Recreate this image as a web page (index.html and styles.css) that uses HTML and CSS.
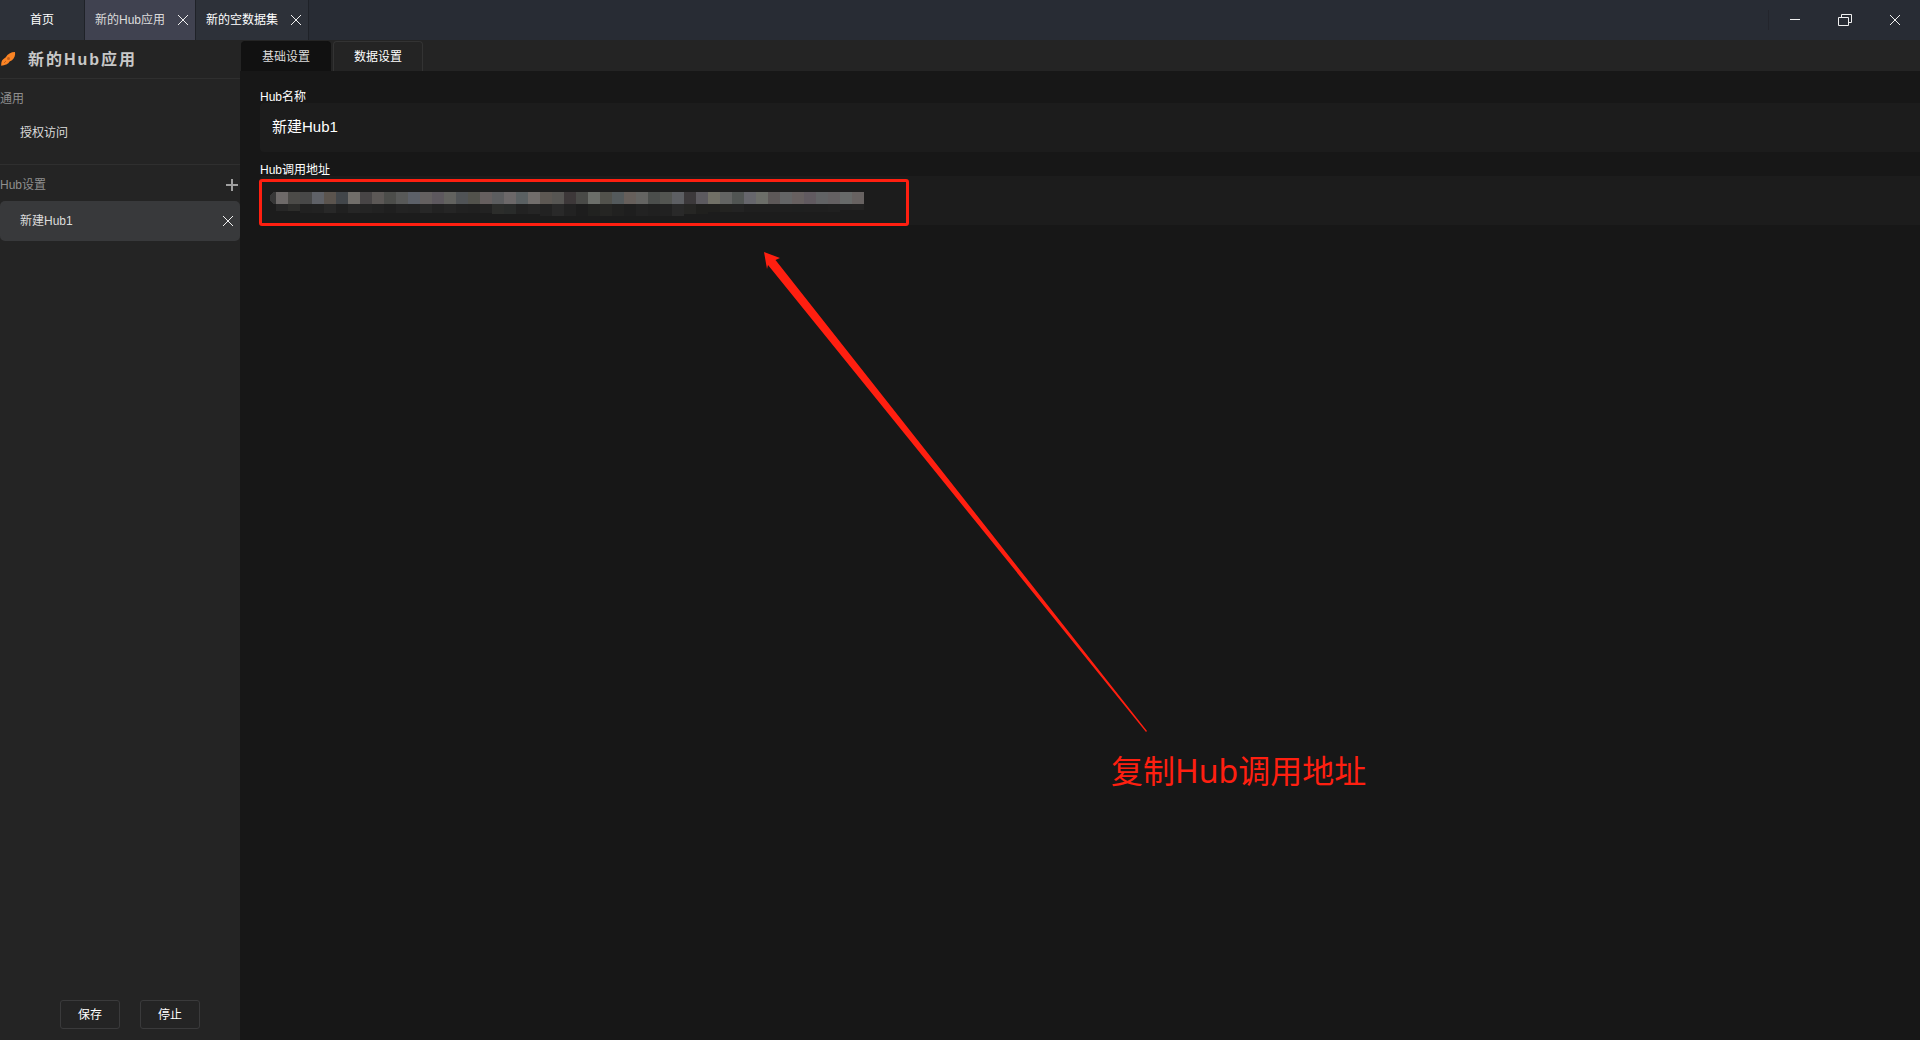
FILE: index.html
```
<!DOCTYPE html>
<html lang="zh-CN">
<head>
<meta charset="utf-8">
<title>新的Hub应用</title>
<link rel="stylesheet" href="styles.css">
</head>
<body>
<header class="titlebar">
  <nav class="window-tabs">
    <a class="window-tab home" href="#">首页</a>
    <div class="window-tab active"><a href="#">新的Hub应用</a><button class="icon-btn" aria-label="关闭"><svg width="12" height="12" viewBox="0 0 12 12"><path d="M1 1L11 11M11 1L1 11"/></svg></button></div>
    <div class="window-tab"><a href="#">新的空数据集</a><button class="icon-btn" aria-label="关闭"><svg width="12" height="12" viewBox="0 0 12 12"><path d="M1 1L11 11M11 1L1 11"/></svg></button></div>
  </nav>
  <div class="window-controls">
    <button class="control" aria-label="最小化"><svg width="14" height="12" viewBox="0 0 14 12"><path d="M2 5.5H12"/></svg></button>
    <button class="control" aria-label="还原"><svg width="14" height="12" viewBox="0 0 14 12"><path d="M.5 3.5H10.5V11.5H.5ZM3.5 3.5V.5H13.5V8.5H10.5"/></svg></button>
    <button class="control" aria-label="关闭"><svg width="12" height="12" viewBox="0 0 12 12"><path d="M1 1L11 11M11 1L1 11"/></svg></button>
  </div>
</header>
<div class="workspace">
  <aside class="sidebar">
    <h1 class="app-title">
      <svg class="logo" width="16" height="16" viewBox="0 0 16 16"><path d="M15 1C15.600 4 14.500 7 12 9.200L9.600 10.600C8.500 13 5 14.500 1.200 14.700C1.200 12.500 1.200 9.500 3.200 8.200L5.800 6.200C7.500 3 11 1 15 1Z" fill="#fb8424"/><circle cx="8.500" cy="7.500" r="1.500" fill="#c2601c"/><path d="M4 12L6 10" stroke="#c2601c"/></svg>
      新的Hub应用
    </h1>
    <section class="group general">
      <h2 class="group-title">通用</h2>
      <a class="item" href="#">授权访问</a>
    </section>
    <section class="group hubs">
      <div class="group-head"><h2 class="group-title">Hub设置</h2><button class="icon-btn add" aria-label="添加"><svg width="12" height="12" viewBox="0 0 12 12"><path d="M6 0V12M0 6H12"/></svg></button></div>
      <div class="item selected"><a href="#">新建Hub1</a><button class="icon-btn" aria-label="删除"><svg width="12" height="12" viewBox="0 0 12 12"><path d="M1 1L11 11M11 1L1 11"/></svg></button></div>
    </section>
    <footer class="actions"><button class="action">保存</button><button class="action">停止</button></footer>
  </aside>
  <main class="main">
    <nav class="page-tabs"><a class="page-tab current" href="#">基础设置</a><a class="page-tab" href="#">数据设置</a></nav>
    <form class="form">
      <label class="label" for="name">Hub名称</label>
      <input class="input" id="name" type="text" value="新建Hub1">
      <label class="label" for="address">Hub调用地址</label>
      <div class="field">
        <input class="input" id="address" type="text" readonly>
        <svg class="mask" id="mask" width="594" height="24" viewBox="0 0 594 24" shape-rendering="crispEdges"></svg>
        <div class="highlight"></div>
      </div>
    </form>
    <svg class="arrow" width="386" height="482" viewBox="0 0 386 482"><path d="M1 0L17 6L12.500 8L384 479L383 480L5 13L4 17Z" fill="#ff1f10"/></svg>
    <p class="note">复制Hub调用地址</p>
  </main>
</div>
<script src="mask.js"></script>
</body>
</html>
```
FILE: mask.js
```
// Mosaic that hides the address: one bright row and one faint row of 12px cells.
const bright = "6e6a69 4c4b48 484848 5f6167 5b544e 42464a 716e6a 484546 5c5856 4c4d4a 585958 5c6068 646060 5d585e 62625f 505356 52524c 665f5f 5c5d5f 6c6869 5a6062 716d6b 5d5853 575653 3d3839 494a47 6b6e69 52524c 545a5c 665f5b 646462 4b4e4c 535551 5d5f63 3c393b 5c5a5f 717066 636463 515553 66666c 6c6e69 5d5858 646566 676060 615a60 626365 646062 676a69 676261".split(" ");
const faint = "272727 2d2d2b 212121 222222 282828 202020 262626 242424 222222 1f1f1f 232323 222222 272727 222222 252525 212121 202020 222222 2c2d2b 292b2a 222222 252525 222222 292929 222222 1d1d1d 212220 252523 212120 1e1e1e 222222 202020 212121 292929 262624 20201e 20201e 232321 232323 1f1f1f 1f1f1f 1f1f1f 1f1f1f 1e1f1f 1f1f1f 1f1f1f 202020 212121 222222".split(" ");
let cells = '<path d="M6 0H3L0 3V9L3 12H6Z" fill="#373737"/>';
bright.forEach((color, i) => {
  const x = 6 + i * 12;
  const h = i < 2 ? 7 : i < 18 ? 9 : i < 22 ? 10 : i < 34 ? 12 : i < 36 ? 10 : i < 47 ? 8 : 6;
  cells += `<rect x="${x}" y="0" width="12" height="12" fill="#${color}"/><rect x="${x}" y="12" width="12" height="${h}" fill="#${faint[i]}"/>`;
});
document.getElementById("mask").innerHTML = cells;
```
FILE: styles.css
```
* { box-sizing: border-box; }
body {
  margin: 0;
  min-height: 100vh;
  display: flex;
  flex-direction: column;
  background: #171717;
  color: #fff;
  font: 12px/16px "Liberation Sans", "Noto Sans CJK SC", sans-serif;
}
a { color: inherit; text-decoration: none; }
button { padding: 0; border: 0; background: none; color: inherit; font: inherit; }
svg { display: block; fill: none; stroke: none; }
h1, h2, p { margin: 0; }
button svg { stroke: #f0f0f0; }

.titlebar { height: 40px; display: flex; justify-content: space-between; background: #282c34; }
.window-tabs { display: flex; }
.window-tab {
  display: flex;
  align-items: center;
  gap: 12px;
  padding: 0 6px 0 10px;
  border-right: 1px solid #1f2228;
  background: #2d3139;
}
.window-tab.home { padding: 0 30px; }
.window-tab.active { background: #404250; color: #dcdcdc; }
.window-controls { display: flex; align-items: center; }
.control { width: 50px; height: 20px; display: flex; align-items: center; justify-content: center; }
.control:first-child { width: 52px; border-left: 1px solid #23252c; }

.workspace { flex: 1; display: flex; }
.sidebar { width: 240px; flex: none; display: flex; flex-direction: column; background: #242424; color: #dcdcdc; }
.app-title {
  height: 39px;
  padding-top: 2px;
  display: flex;
  align-items: center;
  gap: 12px;
  border-bottom: 1px solid #2f2f2f;
  color: #c8c8c8;
  font-size: 16px;
  line-height: 20px;
  letter-spacing: 2px;
}
.logo { margin-bottom: 2px; }
.group-title { color: #8f8f8f; font-size: 12px; font-weight: 400; }
.general { height: 86px; padding-top: 12px; border-bottom: 1px solid #2f2f2f; }
.group-head { height: 36px; padding: 4px 2px 0 0; display: flex; align-items: center; justify-content: space-between; }
.add svg { stroke: #a0a0a0; stroke-width: 2; }
.item { height: 40px; padding: 0 6px 0 20px; display: flex; align-items: center; justify-content: space-between; }
.general .item { margin-top: 6px; }
.selected { border-radius: 5px; background: #38393b; }
.actions { margin-top: auto; padding: 0 40px 11px 60px; display: flex; gap: 20px; }
.action { width: 60px; height: 29px; border: 1px solid #3a3a3b; border-radius: 3px; color: #fff; }

.main { flex: 1; min-width: 0; position: relative; }
.page-tabs { height: 31px; padding: 1px 1px 0; display: flex; gap: 2px; background: #242424; }
.page-tab {
  width: 90px;
  display: flex;
  align-items: center;
  justify-content: center;
  border: 1px solid #333;
  border-bottom: 0;
  border-radius: 4px 4px 0 0;
}
.page-tab.current { border-color: #111; background: #111; color: #dcdcdc; }
.form { padding: 18px 0 0 20px; display: flex; flex-direction: column; }
.label { height: 14px; }
.input {
  display: block;
  width: 100%;
  height: 49px;
  padding: 0 12px 4px;
  border: 0;
  border-radius: 4px 0 0 4px;
  outline: 0;
  background: #1c1c1c;
  color: #fff;
  font: 15px/20px "Liberation Sans", "Noto Sans CJK SC", sans-serif;
}
.input + .label { margin-top: 10px; }
.field { position: relative; }
.mask { position: absolute; left: 10px; top: 16px; }
.highlight { position: absolute; left: -1px; top: 3px; width: 650px; height: 47px; border: 3px solid #ff1f10; border-radius: 3px; }
.arrow { position: absolute; left: 523px; top: 212px; }
.note { position: absolute; left: 871px; top: 711px; color: #ff1f10; font: 32px/40px "Noto Sans", "Noto Sans CJK SC", sans-serif; white-space: nowrap; }
```
